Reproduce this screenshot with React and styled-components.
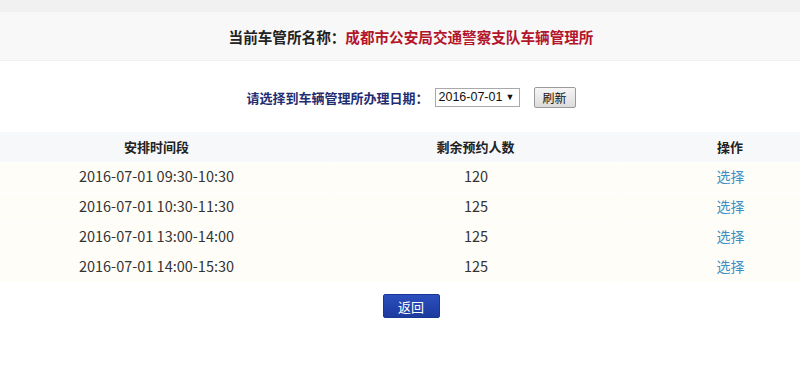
import React from "react";
import styled, { createGlobalStyle } from "styled-components";

const Global = createGlobalStyle`
  html, body { margin: 0; padding: 0; background: #fff; overflow: hidden; }
  body { font-family: "Noto Sans CJK SC", "Noto Sans", sans-serif; }
`;

const Viewport = styled.div`
  width: 800px;
  overflow: hidden;
`;

const Page = styled.div`
  width: 862px;
  margin-left: -20px;
`;

const TopStrip = styled.div`
  height: 12px;
  background: #f1f1f1;
`;

const Banner = styled.div`
  height: 48px;
  background: #f8f8f8;
  border-bottom: 1px solid #f0f0f0;
  display: flex;
  align-items: center;
  justify-content: center;
  font-size: 14.6px;
  font-weight: bold;
  color: #222;
`;

const Red = styled.span`
  color: #b3152b;
`;

const DateRow = styled.div`
  height: 71px;
  display: flex;
  align-items: center;
  justify-content: center;
  gap: 6px;
  padding-top: 1px;
  box-sizing: border-box;
`;

const DateLabel = styled.span`
  font-size: 13px;
  font-weight: bold;
  color: #1f2d72;
`;

const Select = styled.div`
  width: 85px;
  height: 19px;
  box-sizing: border-box;
  border: 1px solid #a9a9a9;
  background: #fff;
  display: flex;
  align-items: center;
  justify-content: space-between;
  padding: 0 4px 0 3px;
  white-space: nowrap;
  font-family: "Liberation Sans", Arial, sans-serif;
  font-size: 12.5px;
  color: #111;
`;

const Arrow = styled.span`
  font-size: 9px;
`;

const Refresh = styled.button`
  margin-left: 8px;
  width: 42px;
  height: 21px;
  padding: 0;
  border: 1px solid #9a9a9a;
  border-radius: 2px;
  background: linear-gradient(#f6f6f6, #dcdcdc);
  font-family: "Noto Sans CJK SC", sans-serif;
  font-size: 12px;
  color: #111;
`;

const Table = styled.div`
  display: grid;
  grid-template-columns: 353px 285px 224px;
  row-gap: 1px;
  background: #fff;
`;

const HeadCell = styled.div`
  height: 30px;
  box-sizing: border-box;
  padding-bottom: 1px;
  background: #f7f8f9;
  display: flex;
  align-items: center;
  justify-content: center;
  font-size: 13px;
  font-weight: bold;
  color: #222;
`;

const Cell = styled.div`
  height: 29px;
  box-sizing: border-box;
  padding-bottom: 4px;
  background: #fffdf8;
  display: flex;
  align-items: center;
  justify-content: center;
  font-size: 14.5px;
  color: #333;
  border-left: ${(p) => (p.$first ? "none" : "1px solid #fff")};
`;

const Link = styled.a`
  color: #3d8fc4;
  text-decoration: none;
  font-size: 14px;
`;

const Footer = styled.div`
  display: flex;
  justify-content: center;
  padding-top: 12px;
`;

const BackButton = styled.button`
  width: 57px;
  height: 24px;
  border: 1px solid #1a3795;
  border-radius: 2px;
  background: linear-gradient(#2b4fbd, #1d3a9e);
  color: #fff;
  font-family: "Noto Sans CJK SC", sans-serif;
  font-size: 13px;
  padding: 0;
`;

const rows = [
  ["2016-07-01 09:30-10:30", "120"],
  ["2016-07-01 10:30-11:30", "125"],
  ["2016-07-01 13:00-14:00", "125"],
  ["2016-07-01 14:00-15:30", "125"],
];

export default function App() {
  return (
    <Viewport>
      <Global />
      <Page>
        <TopStrip />
        <Banner>
          当前车管所名称：<Red>成都市公安局交通警察支队车辆管理所</Red>
        </Banner>
        <DateRow>
          <DateLabel>请选择到车辆管理所办理日期：</DateLabel>
          <Select>
            <span>2016-07-01</span>
            <Arrow>▼</Arrow>
          </Select>
          <Refresh>刷新</Refresh>
        </DateRow>
        <Table>
          <HeadCell>安排时间段</HeadCell>
          <HeadCell>剩余预约人数</HeadCell>
          <HeadCell>操作</HeadCell>
          {rows.map(([t, n]) => (
            <React.Fragment key={t}>
              <Cell $first>{t}</Cell>
              <Cell>{n}</Cell>
              <Cell>
                <Link href="#">选择</Link>
              </Cell>
            </React.Fragment>
          ))}
        </Table>
        <Footer>
          <BackButton>返回</BackButton>
        </Footer>
      </Page>
    </Viewport>
  );
}
